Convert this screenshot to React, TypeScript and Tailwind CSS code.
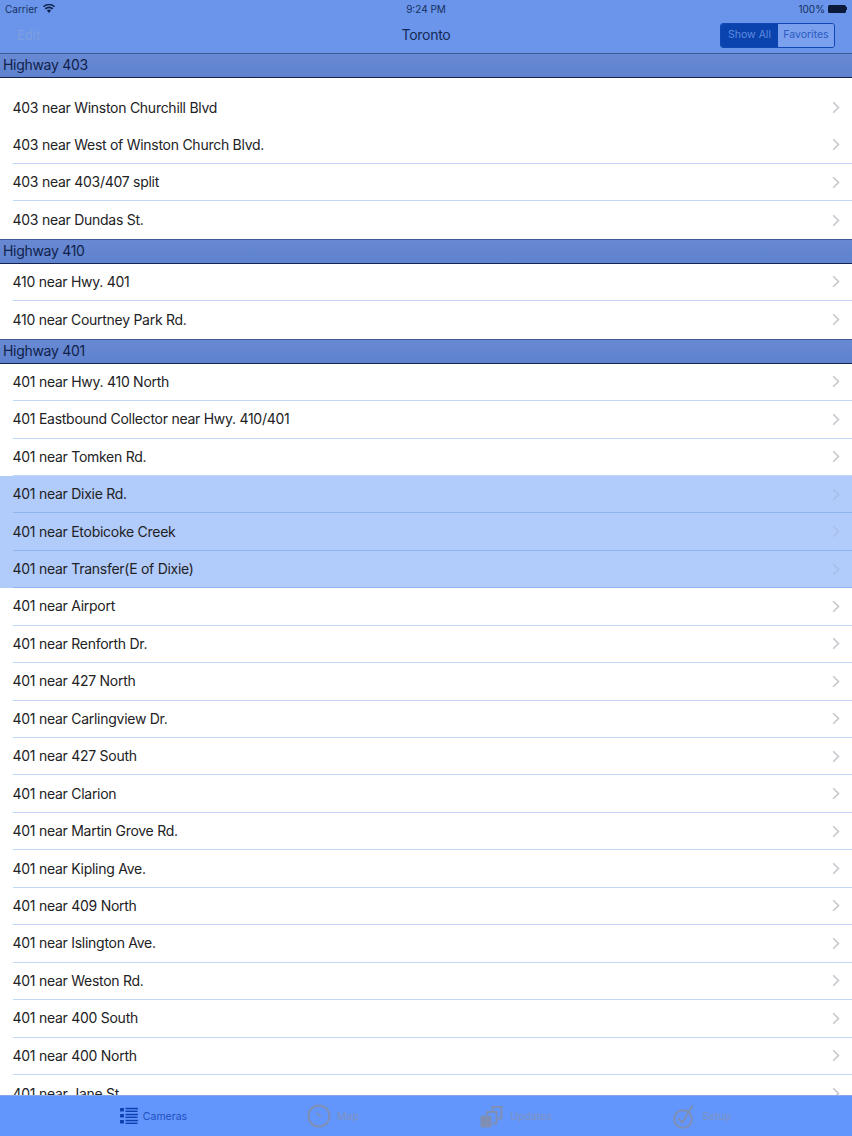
import React from "react";

const font = { fontFamily: '"Inter", "Liberation Sans", sans-serif' };

type Row = { t: string; sel?: boolean; noLine?: boolean };
const s1: Row[] = ["403 near Winston Churchill Blvd", "403 near West of Winston Church Blvd.", "403 near 403/407 split", "403 near Dundas St."].map((t, i) => ({ t, noLine: i === 0 }));
const s2: Row[] = ["410 near Hwy. 401", "410 near Courtney Park Rd."].map((t) => ({ t }));
const s3: Row[] = [
  "401 near Hwy. 410 North",
  "401 Eastbound Collector near Hwy. 410/401",
  "401 near Tomken Rd.",
  "401 near Dixie Rd.",
  "401 near Etobicoke Creek",
  "401 near Transfer(E of Dixie)",
  "401 near Airport",
  "401 near Renforth Dr.",
  "401 near 427 North",
  "401 near Carlingview Dr.",
  "401 near 427 South",
  "401 near Clarion",
  "401 near Martin Grove Rd.",
  "401 near Kipling Ave.",
  "401 near 409 North",
  "401 near Islington Ave.",
  "401 near Weston Rd.",
  "401 near 400 South",
  "401 near 400 North",
  "401 near Jane St.",
].map((t, i) => ({ t, sel: i >= 3 && i <= 5 }));

function Chevron({ sel }: { sel?: boolean }) {
  return (
    <svg width="8" height="13" viewBox="0 0 8 13" fill="none" className="shrink-0">
      <path d="M1.2 1.2 6.5 6.5 1.2 11.8" stroke={sel ? "#a9bfe8" : "#c7c7cc"} strokeWidth="1.6" />
    </svg>
  );
}

function Cell({ row, last }: { row: Row; last: boolean }) {
  const line = last || row.noLine ? "" : row.sel ? "border-b border-[#8fb4ee]" : "border-b border-[#c0d6f4]";
  return (
    <div className={`h-[37.44px] shrink-0 pl-[13px] ${row.sel ? "bg-[#b1cbfb]" : "bg-white"}`}>
      <div className={`h-full flex items-center pr-[12px] box-border ${line}`}>
        <span className="flex-1 -ml-[0.5px] text-[14px] leading-none text-[#222224] tracking-[-0.27px] whitespace-nowrap">{row.t}</span>
        <Chevron sel={row.sel} />
      </div>
    </div>
  );
}

function Header({ title }: { title: string }) {
  return (
    <div className="h-[25px] shrink-0 box-border border-t border-b border-t-[#3f5a96] border-b-[#14244f] bg-linear-to-b from-[#6889d2] to-[#5f82cf] pl-[3px] pb-[1px] flex items-center text-[14px] tracking-[-0.3px] leading-none text-[#10214a]">
      {title}
    </div>
  );
}

function Section({ title, rows, gap }: { title: string; rows: Row[]; gap?: boolean }) {
  return (
    <section className="flex flex-col shrink-0">
      <Header title={title} />
      {gap && <div className="h-[10.75px] bg-white" />}
      {rows.map((r, i) => (
        <Cell key={r.t} row={r} last={i === rows.length - 1} />
      ))}
    </section>
  );
}

function ListIcon() {
  return (
    <svg width="18" height="18" viewBox="0 0 18 18" fill="#0f3fb0">
      <rect x="0" y="1" width="4" height="3.4" rx=".6" />
      <rect x="0" y="7" width="4" height="3.4" rx=".6" />
      <rect x="0" y="13" width="4" height="3.4" rx=".6" />
      <rect x="5.5" y="0.8" width="12.5" height="1.5" />
      <rect x="5.5" y="3.6" width="12" height="1.4" />
      <rect x="5.5" y="6.8" width="12.5" height="1.5" />
      <rect x="5.5" y="9.6" width="12" height="1.4" />
      <rect x="5.5" y="12.8" width="12.5" height="1.5" />
      <rect x="5.5" y="15.6" width="12" height="1.4" />
    </svg>
  );
}

function MapIcon() {
  return (
    <svg width="24" height="24" viewBox="0 0 24 24" fill="none" stroke="#7f8fb4" strokeWidth="2">
      <circle cx="12" cy="12" r="10.5" />
      <path d="M9.5 8.5 14 13" strokeWidth="1.5" />
    </svg>
  );
}

function UpdatesIcon() {
  return (
    <svg width="23" height="23" viewBox="0 0 23 23" fill="none" stroke="#7f8fb4" strokeWidth="2">
      <rect x="0.5" y="10.5" width="11" height="12" rx="1.5" fill="#7f8fb4" stroke="none" />
      <path d="M12.5 18.5H15.5a1 1 0 0 0 1-1V7H7V10" />
      <path d="M18 13.5h2.5a1 1 0 0 0 1-1V2H12.5V6" />
    </svg>
  );
}

function SetupIcon() {
  return (
    <svg width="22" height="25" viewBox="0 0 22 25" fill="none" stroke="#7f8fb4">
      <circle cx="10" cy="15" r="8.8" strokeWidth="2" />
      <path d="M5.5 14.5 9.5 18.5 19.5 1.5" strokeWidth="2" />
    </svg>
  );
}

function Tab({ icon, label, active, gap }: { icon: React.ReactNode; label: string; active?: boolean; gap: string }) {
  return (
    <div className={`flex items-center ${gap}`}>
      {icon}
      <span className={`text-[10.5px] leading-none translate-y-[1px] ${active ? "text-[#1f4fc0]" : "text-[#7f93c0]"}`}>{label}</span>
    </div>
  );
}

export default function App() {
  return (
    <div className="w-[852px] h-[1136px] flex flex-col overflow-hidden bg-white" style={font}>
      <header className="h-[53.25px] shrink-0 bg-[#6a95ea] flex flex-col">
        <div className="h-[17px] px-[5px] flex items-center justify-between text-[10px] leading-none text-[#15305f] relative">
          <div className="flex items-center gap-[5px]">
            <span>Carrier</span>
            <svg width="12" height="9" viewBox="0 0 12 9" fill="#10254f">
              <path d="M6 9 3.9 6.6a3 3 0 0 1 4.2 0Zm-3-3.4L1.7 4.2a6.3 6.3 0 0 1 8.6 0L9 5.6a4.4 4.4 0 0 0-6 0ZM.9 3.3 0 2.2a8.7 8.7 0 0 1 12 0l-.9 1.1a7.4 7.4 0 0 0-10.2 0Z" />
            </svg>
          </div>
          <span className="absolute left-0 right-0 text-center">9:24 PM</span>
          <div className="flex items-center gap-[3px]">
            <span>100%</span>
            <span className="flex items-center">
              <span className="w-[18px] h-[8px] bg-[#0b1a3a] rounded-[1.5px]" />
              <span className="w-[1px] h-[3px] bg-[#0b1a3a]" />
            </span>
          </div>
        </div>
        <div className="flex-1 relative flex items-center justify-between pl-[17px] pr-[17px]">
          <span className="text-[13px] text-[#7f9fe0] leading-none">Edit</span>
          <span className="absolute left-0 right-0 text-center text-[14px] tracking-[-0.3px] text-[#142a57] leading-none">Toronto</span>
          <div className="flex w-[115px] h-[25px] rounded-[3px] border border-[#0f47b4] text-[10.5px] leading-none overflow-hidden relative">
            <span className="w-[57px] bg-[#0a43ad] text-[#5f8be0] flex items-center justify-center">Show All</span>
            <span className="flex-1 bg-[#7ba1ee] text-[#2a5bbf] flex items-center justify-center">Favorites</span>
          </div>
        </div>
      </header>
      <main className="flex-1 min-h-0 overflow-hidden flex flex-col">
        <Section title="Highway 403" rows={s1} gap />
        <Section title="Highway 410" rows={s2} />
        <Section title="Highway 401" rows={s3} />
      </main>
      <nav className="h-[41px] shrink-0 bg-[#6396fc] border-t border-[#8aa8e8] box-border grid grid-cols-[183px_176px_190px_182px] pl-[62px]">
        <div className="flex items-center justify-center"><Tab icon={<ListIcon />} label="Cameras" active gap="gap-[5px]" /></div>
        <div className="flex items-center justify-center"><Tab icon={<MapIcon />} label="Map" gap="gap-[6px]" /></div>
        <div className="flex items-center justify-center"><Tab icon={<UpdatesIcon />} label="Updates" gap="gap-[7px]" /></div>
        <div className="flex items-center justify-center"><Tab icon={<SetupIcon />} label="Setup" gap="gap-[7px]" /></div>
      </nav>
    </div>
  );
}
